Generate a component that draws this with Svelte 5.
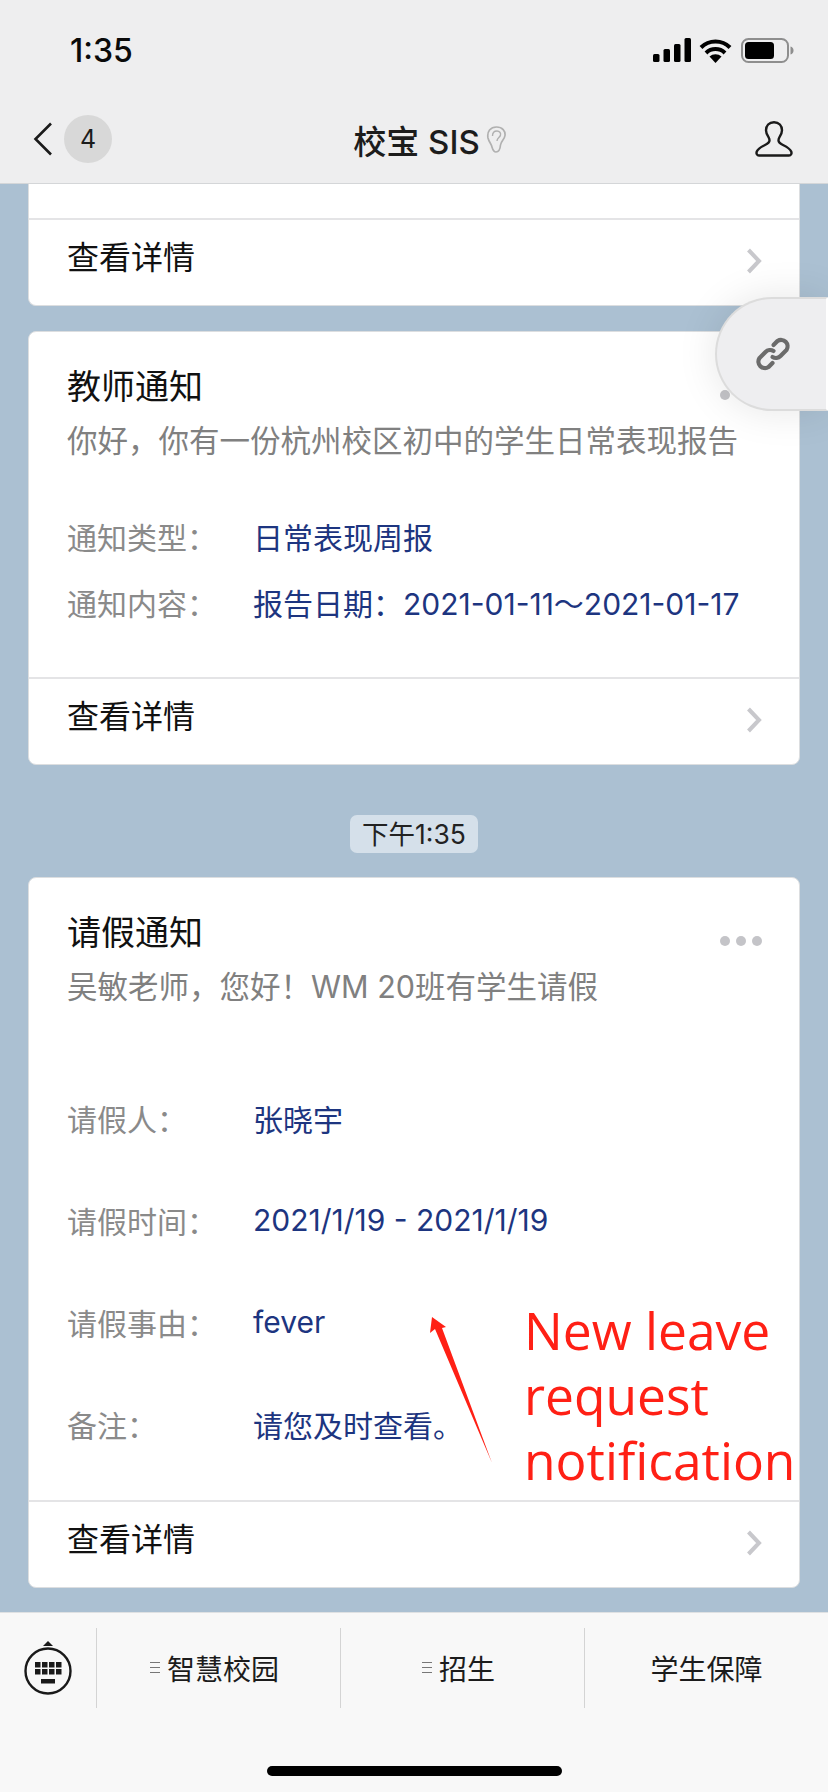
<script>
  const cards = [
    {
      title: '教师通知',
      desc: '你好，你有一份杭州校区初中的学生日常表现报告',
      rows: [
        ['通知类型：', '日常表现周报'],
        ['通知内容：', '报告日期：2021-01-11～2021-01-17']
      ]
    },
    {
      title: '请假通知',
      desc: '吴敏老师，您好！WM 20班有学生请假',
      rows: [
        ['请假人：', '张晓宇'],
        ['请假时间：', '2021/1/19 - 2021/1/19'],
        ['请假事由：', 'fever'],
        ['备注：', '请您及时查看。']
      ]
    }
  ];

  const menus = [
    { label: '智慧校园', sub: true },
    { label: '招生', sub: true },
    { label: '学生保障', sub: false }
  ];
</script>

{#snippet footer()}
  <div class="card-footer">
    <span>查看详情</span>
    <svg class="chevron" width="17" height="26" viewBox="0 0 17 26">
      <path d="M2.500 2l10.500 11L2.500 24" fill="none" stroke="#c8c8cc" stroke-width="4" />
    </svg>
  </div>
{/snippet}

{#snippet card(c, cls)}
  <div class="card {cls}">
    <div class="card-title">{c.title}</div>
    <div class="card-desc">{c.desc}</div>
    <div class="more"><i></i><i></i><i></i></div>
    <div class="rows">
      {#each c.rows as row}
        <div class="row">
          <span class="key">{row[0]}</span>
          <span class="val">{row[1]}</span>
        </div>
      {/each}
    </div>
    {@render footer()}
  </div>
{/snippet}

<div class="page">
  <header>
    <div class="status">
      <span class="time">1:35</span>
      <div class="status-icons">
        <svg width="38" height="24" viewBox="0 0 38 24">
          <rect x="0" y="16" width="6.500" height="8" rx="1.500" />
          <rect x="10.500" y="11" width="6.500" height="13" rx="1.500" />
          <rect x="21" y="6" width="6.500" height="18" rx="1.500" />
          <rect x="31.500" y="0" width="6.500" height="24" rx="1.500" />
        </svg>
        <svg width="33" height="25" viewBox="0 0 33 25">
          <path d="M2 9.500a20.500 20.500 0 0 1 29 0M7 15a13.500 13.500 0 0 1 19 0" fill="none" stroke="#000" stroke-width="4" />
          <path d="M16.500 25l-6-6.500a9 9 0 0 1 12 0z" />
        </svg>
        <svg width="53" height="25" viewBox="0 0 53 25">
          <rect x="1" y="1" width="46" height="23" rx="6.500" fill="none" stroke="#8e8e8e" stroke-width="2" />
          <rect x="4" y="4" width="29" height="17" rx="3.500" />
          <path d="M49.500 8.500c2 .5 3 2 3 4s-1 3.500-3 4z" fill="#8e8e8e" />
        </svg>
      </div>
    </div>
    <div class="nav">
      <svg class="back" width="20" height="34" viewBox="0 0 20 34">
        <path d="M18 1.500L2.500 17 18 32.500" fill="none" stroke="#1a1a1a" stroke-width="2.600" />
      </svg>
      <span class="badge">4</span>
      <div class="nav-title">
        校宝 SIS
        <svg width="20" height="27" viewBox="0 0 20 27">
          <path d="M2 12C.8 5.500 4.500 1 10.500 1S19.500 5 19 9.500c-.5 4-4 5.500-4.500 9.500-.4 4.500-2 7-4.500 7-3 0-3.500-3.500-4.500-6.500C4.600 17 2.800 15.500 2 12z" fill="none" stroke="#b0b0b0" stroke-width="1.700" />
          <path d="M6.500 10c0-3.500 2-5 4.500-5s4 2 3.500 4c-.5 2.500-3.500 3-3.500 6" fill="none" stroke="#b0b0b0" stroke-width="1.400" />
        </svg>
      </div>
      <svg class="person" width="38" height="36" viewBox="0 0 38 36">
        <path d="M19 1.200c-5 0-8 3.500-8 8 0 3 1.200 5 2.500 7 .8 1.200 1 2.200 1 3.300 0 2-1.500 3-4.500 4.500-3 1.500-7 3.500-8.200 6.500-.8 2 .2 4 2.200 4h30c2 0 3-2 2.200-4-1.200-3-5.200-5-8.200-6.500-3-1.500-4.500-2.500-4.500-4.500 0-1.100.2-2.100 1-3.300 1.300-2 2.500-4 2.500-7 0-4.500-3-8-8-8z" fill="none" stroke="#1a1a1a" stroke-width="2.400" />
      </svg>
    </div>
  </header>

  <main>
    <div class="card cut">
      <div class="cut-top"></div>
      {@render footer()}
    </div>

    {@render card(cards[0], 'teacher')}

    <div class="stamp"><span>下午1:35</span></div>

    {@render card(cards[1], 'leave')}

    <!-- annotation pasted on top of the screenshot -->
    <svg class="arrow" width="68" height="150" viewBox="0 0 68 150">
      <path d="M4 0L18 10 14 11 64 146 7 12 2 16z" fill="#ff2015" />
    </svg>
    <div class="note">New leave<br />request<br />notification</div>

    <div class="float-link">
      <svg width="38" height="38" viewBox="0 0 38 38">
        <g fill="none" stroke="#6b6b6b" stroke-width="4.200" stroke-linecap="round">
          <path d="M19.500 10l4-4a6.500 6.500 0 0 1 9 9l-6 6a6.500 6.500 0 0 1-8 1" />
          <path d="M18.500 28l-4 4a6.500 6.500 0 0 1-9-9l6-6a6.500 6.500 0 0 1 8-1" />
        </g>
      </svg>
    </div>
  </main>

  <footer>
    <div class="menu-bar">
      <div class="kb">
        <svg width="48" height="54" viewBox="0 0 48 54">
          <path d="M24 0l5 5H19z" fill="#1a1a1a" />
          <circle cx="24" cy="30" r="22.500" fill="none" stroke="#1a1a1a" stroke-width="2.400" />
          <g fill="#1a1a1a">
            <rect x="11" y="21" width="5.500" height="5.500" /><rect x="18" y="21" width="5.500" height="5.500" /><rect x="25" y="21" width="5.500" height="5.500" /><rect x="32" y="21" width="5.500" height="5.500" />
            <rect x="11" y="28" width="5.500" height="5.500" /><rect x="18" y="28" width="5.500" height="5.500" /><rect x="25" y="28" width="5.500" height="5.500" /><rect x="32" y="28" width="5.500" height="5.500" />
            <rect x="17" y="38" width="14" height="4.500" />
          </g>
        </svg>
      </div>
      {#each menus as m}
        <div class="menu-item" class:sub={m.sub}>
          {#if m.sub}<span class="lines"><i></i><i></i><i></i></span>{/if}
          {m.label}
        </div>
      {/each}
    </div>
    <div class="home"></div>
  </footer>
</div>

<style>
  :global(body) {
    margin: 0;
    background: #abc0d2;
  }

  .page {
    width: 828px;
    height: 1792px;
    display: flex;
    flex-direction: column;
    overflow: hidden;
    font-family: Inter, "Noto Sans CJK SC", sans-serif;
  }

  header {
    height: 183px;
    flex: none;
    background: #eeeeef;
    border-bottom: 1px solid #d4d6d8;
  }

  .status {
    height: 100px;
    padding: 0 34px 0 70px;
    display: flex;
    justify-content: space-between;
    align-items: center;
  }

  .time {
    font-size: 32px;
    font-weight: 500;
    color: #0a0a0a;
  }

  .status-icons {
    display: flex;
    align-items: center;
    gap: 8px;
  }

  .status-icons svg:last-child {
    margin-left: 1px;
  }

  .nav {
    height: 83px;
    display: flex;
    align-items: center;
    padding: 0 35px 6px 33px;
    box-sizing: border-box;
  }

  .badge {
    width: 48px;
    height: 48px;
    margin-left: 11px;
    border-radius: 50%;
    background: #d8d8d8;
    color: #1c1c1c;
    font-size: 25px;
    display: flex;
    align-items: center;
    justify-content: center;
  }

  .nav-title {
    flex: 1;
    display: flex;
    align-items: center;
    justify-content: center;
    gap: 6px;
    font-size: 33px;
    font-weight: 500;
    color: #1c1c1c;
    padding-right: 8px;
    padding-top: 2px;
  }

  main {
    position: relative;
    flex: 1;
    min-height: 0;
    padding: 0 28px;
    display: flex;
    flex-direction: column;
  }

  .card {
    position: relative;
    background: #fff;
    border: 1px solid #dcdee0;
    border-radius: 8px;
    box-sizing: border-box;
    flex: none;
  }

  .cut {
    border-top: 0;
    border-top-left-radius: 0;
    border-top-right-radius: 0;
    height: 122px;
  }

  .cut-top {
    height: 34px;
  }

  .teacher {
    margin-top: 25px;
    height: 434px;
  }

  .leave {
    height: 711px;
  }

  .stamp {
    height: 112px;
    flex: none;
    box-sizing: border-box;
    padding-top: 25px;
    display: flex;
    align-items: center;
    justify-content: center;
  }

  .stamp span {
    background: #d5e0ea;
    color: #222;
    font-size: 26.500px;
    line-height: 38px;
    padding: 0 12px;
    border-radius: 7px;
  }

  .card-title {
    padding: 27px 38px 0;
    font-size: 34px;
    line-height: 56px;
    color: #111;
  }

  .card-desc {
    padding: 0 38px;
    margin-top: -1px;
    font-size: 30.500px;
    line-height: 54px;
    color: #808080;
    white-space: nowrap;
  }

  .more {
    position: absolute;
    top: 58px;
    right: 37px;
    display: flex;
    gap: 6px;
  }

  .more i {
    width: 10px;
    height: 10px;
    border-radius: 50%;
    background: #c4c4c8;
  }

  .rows {
    padding: 0 38px;
  }

  .row {
    display: flex;
    font-size: 30px;
    white-space: nowrap;
  }

  .teacher .rows {
    padding-top: 35px;
  }

  .teacher .row {
    height: 66px;
    align-items: center;
  }

  .leave .rows {
    padding-top: 53px;
  }

  .leave .row {
    height: 102px;
    align-items: center;
  }

  .key {
    width: 186px;
    color: #8a8a8a;
  }

  .val {
    color: #1d3580;
  }

  .card-footer {
    position: absolute;
    left: 0;
    right: 0;
    bottom: 0;
    height: 87px;
    box-sizing: border-box;
    border-top: 2px solid #e4e4e6;
    padding: 0 36px 0 38px;
    display: flex;
    align-items: center;
    justify-content: space-between;
    font-size: 32px;
    color: #111;
  }

  .card-footer span {
    padding-bottom: 15px;
  }

  .chevron {
    margin-bottom: 4px;
  }

  .arrow {
    position: absolute;
    left: 428px;
    top: 1133px;
  }

  .note {
    position: absolute;
    left: 524px;
    top: 1114px;
    font: 400 51.500px/65px "Open Sans", "Liberation Sans", sans-serif;
    color: #ff2015;
    white-space: nowrap;
  }

  .float-link {
    position: absolute;
    right: 0;
    top: 113px;
    width: 113px;
    height: 114px;
    box-sizing: border-box;
    background: #eeeef0;
    border: 2px solid #dcdcdc;
    border-right-color: #fff;
    border-radius: 57px 0 0 57px;
    box-shadow: 0 0 40px rgba(0, 0, 0, 0.1);
    display: flex;
    align-items: center;
    padding-left: 37px;
  }

  footer {
    flex: none;
    height: 180px;
    background: #f8f8f8;
    border-top: 1px solid #dfe1e3;
    box-sizing: border-box;
    position: relative;
  }

  .menu-bar {
    display: grid;
    grid-template-columns: 96px 1fr 1fr 1fr;
    height: 80px;
    margin-top: 15px;
  }

  .kb {
    display: flex;
    align-items: center;
    justify-content: center;
  }

  .menu-item {
    border-left: 1px solid #d4d4d4;
    display: flex;
    align-items: center;
    justify-content: center;
    gap: 7px;
    font-size: 28px;
    color: #1c1c1c;
    padding-bottom: 1px;
  }

  .menu-item.sub {
    padding-right: 8px;
  }

  .lines {
    display: flex;
    flex-direction: column;
    gap: 4px;
  }

  .lines i {
    width: 10px;
    height: 1px;
    background: #777;
  }

  .home {
    position: absolute;
    left: 267px;
    top: 153px;
    width: 295px;
    height: 10px;
    border-radius: 5px;
    background: #000;
  }
</style>
